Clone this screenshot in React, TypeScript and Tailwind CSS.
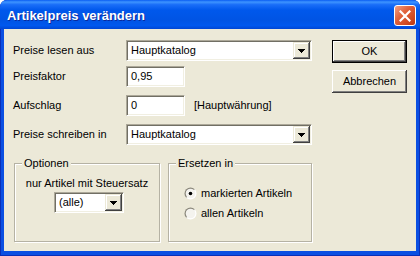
import React from 'react';

const sunken =
  'border border-t-[#aca899] border-l-[#aca899] border-r-white border-b-white shadow-[inset_1px_1px_0_#716f64,inset_-1px_-1px_0_#f1efe2]';

function DropButton() {
  return (
    <div className="flex h-[17px] w-[17px] shrink-0 items-center justify-center bg-[#ece9d8] shadow-[inset_-1px_-1px_0_#404040,inset_1px_1px_0_#ece9d8,inset_-2px_-2px_0_#808080,inset_2px_2px_0_#ffffff]">
      <svg width="7" height="4" viewBox="0 0 7 4" shapeRendering="crispEdges">
        <rect x="0" y="0" width="7" height="1" fill="#000" />
        <rect x="1" y="1" width="5" height="1" fill="#000" />
        <rect x="2" y="2" width="3" height="1" fill="#000" />
        <rect x="3" y="3" width="1" height="1" fill="#000" />
      </svg>
    </div>
  );
}

function Combo({ value, width }: { value: string; width: string }) {
  return (
    <div className={`flex h-[21px] ${width} items-center bg-white p-[1px] ${sunken}`}>
      <span className="flex-1 pl-[3px] text-[11px] leading-[13px]">{value}</span>
      <DropButton />
    </div>
  );
}

function Field({ value }: { value: string }) {
  return (
    <div className={`flex h-[21px] w-[59px] items-center bg-white pl-[4px] ${sunken}`}>
      <span className="text-[11px] leading-[13px]">{value}</span>
    </div>
  );
}

function Radio({ checked }: { checked?: boolean }) {
  return (
    <svg width="13" height="13" viewBox="0 0 13 13">
      <defs>
        <linearGradient id={checked ? 'rg1' : 'rg2'} x1="0" y1="0" x2="1" y2="1">
          <stop offset="0.45" stopColor="#8a877b" />
          <stop offset="0.55" stopColor="#ffffff" />
        </linearGradient>
      </defs>
      <circle cx="6.5" cy="6.5" r="6" fill={`url(#${checked ? 'rg1' : 'rg2'})`} />
      <circle cx="6.5" cy="6.5" r="4.8" fill="#f4f3ee" />
      {checked && <circle cx="6.5" cy="6.5" r="1.8" fill="#000" />}
    </svg>
  );
}

function Button({ label, isDefault }: { label: string; isDefault?: boolean }) {
  return (
    <div
      className={`flex h-[23px] w-[75px] items-center justify-center bg-[#ece9d8] text-[11px] leading-[13px] ${
        isDefault
          ? 'border border-black shadow-[inset_-1px_-1px_0_#404040,inset_1px_1px_0_#ffffff,inset_-2px_-2px_0_#808080]'
          : 'shadow-[inset_-1px_-1px_0_#404040,inset_1px_1px_0_#ffffff,inset_-2px_-2px_0_#808080,inset_2px_2px_0_#ece9d8]'
      }`}
    >
      {label}
    </div>
  );
}

function GroupBox({ title, width, children }: { title: string; width: string; children: React.ReactNode }) {
  return (
    <div className={`relative h-[79px] ${width} border border-[#b5b2a4] shadow-[inset_1px_1px_0_#ffffff,1px_1px_0_#ffffff]`}>
      <span className="absolute left-[7px] top-[-7px] bg-[#ece9d8] px-[2px] text-[11px] leading-[13px]">{title}</span>
      {children}
    </div>
  );
}

export default function App() {
  return (
    <div className="flex h-[256px] w-[420px] flex-col overflow-hidden rounded-t-[7px] bg-[#0b4fe2] font-['Liberation_Sans',Arial,sans-serif] text-black shadow-[inset_0_0_0_1px_#0a2fb8]">
      {/* title bar */}
      <div className="flex h-[29px] shrink-0 items-center justify-between bg-[linear-gradient(to_bottom,#0a5df2_0%,#3e94ff_7%,#1a6ef8_16%,#0058ec_35%,#0054e4_70%,#0058ee_88%,#0046d4_100%)] pl-[7px] pr-[4px]">
        <span className="pt-[2px] text-[13px] font-bold leading-[15px] text-white [text-shadow:1px_1px_0_#0b2a9c]">
          Artikelpreis verändern
        </span>
        <div className="mt-[2px] flex h-[21px] w-[22px] items-center justify-center rounded-[3px] border border-white bg-[linear-gradient(135deg,#f2a083_0%,#e0623c_40%,#cf4a22_75%,#b8360f_100%)]">
          <svg width="12" height="12" viewBox="0 0 12 12">
            <path d="M1.5 1.5 L10.5 10.5 M10.5 1.5 L1.5 10.5" stroke="#fff" strokeWidth="2.2" strokeLinecap="square" />
          </svg>
        </div>
      </div>

      {/* client area */}
      <div className="mx-[4px] mb-[5px] flex flex-1 bg-[#ece9d8] pl-[9px] pr-[9px] pt-[11px]">
        <div className="flex w-[299px] flex-col">
          <div className="flex h-[21px] items-center">
            <span className="w-[113px] shrink-0 text-[11px] leading-[13px]">Preise lesen aus</span>
            <Combo value="Hauptkatalog" width="w-[186px]" />
          </div>
          <div className="mt-[5px] flex h-[21px] items-center">
            <span className="w-[113px] shrink-0 text-[11px] leading-[13px]">Preisfaktor</span>
            <Field value="0,95" />
          </div>
          <div className="mt-[8px] flex h-[21px] items-center">
            <span className="w-[113px] shrink-0 text-[11px] leading-[13px]">Aufschlag</span>
            <Field value="0" />
            <span className="ml-[9px] text-[11px] leading-[13px]">[Hauptwährung]</span>
          </div>
          <div className="mt-[8px] flex h-[21px] items-center">
            <span className="w-[113px] shrink-0 text-[11px] leading-[13px]">Preise schreiben in</span>
            <Combo value="Hauptkatalog" width="w-[186px]" />
          </div>

          <div className="ml-[1px] mt-[18px] flex gap-[8px]">
            <GroupBox title="Optionen" width="w-[146px]">
              <div className="flex flex-col items-center pt-[13px]">
                <span className="text-[11px] leading-[13px]">nur Artikel mit Steuersatz</span>
                <div className="ml-[4px] mt-[2px]">
                  <Combo value="(alle)" width="w-[70px]" />
                </div>
              </div>
            </GroupBox>
            <GroupBox title="Ersetzen in" width="w-[144px]">
              <div className="flex flex-col pl-[15px] pt-[19px]">
                <div className="flex h-[20px] items-center gap-[4px]">
                  <Radio checked />
                  <span className="text-[11px] leading-[13px]">markierten Artikeln</span>
                </div>
                <div className="flex h-[20px] items-center gap-[4px]">
                  <Radio />
                  <span className="text-[11px] leading-[13px]">allen Artikeln</span>
                </div>
              </div>
            </GroupBox>
          </div>
        </div>

        <div className="ml-[20px] flex flex-col gap-[7px]">
          <Button label="OK" isDefault />
          <Button label="Abbrechen" />
        </div>
      </div>
    </div>
  );
}
